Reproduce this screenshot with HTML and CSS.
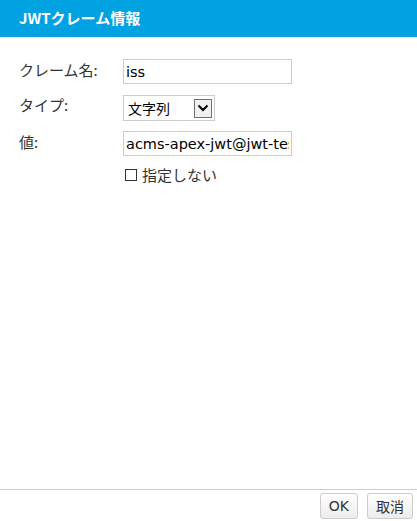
FILE: index.html
```html
<!DOCTYPE html>
<html lang="ja">
<head>
    <meta charset="UTF-8">
    <meta name="viewport" content="width=device-width, initial-scale=1.0">
    <title>JWTクレーム情報</title>
    <link rel="stylesheet" href="styles.css">
</head>
<body>
    <div class="dialog">
        <div class="dialog-title">JWTクレーム情報</div>
        <div class="dialog-body">
            <div class="form-grid">
                <label class="form-label" for="claimName">クレーム名:</label>
                <input class="text-input" type="text" id="claimName" value="iss">

                <label class="form-label" for="claimType">タイプ:</label>
                <div class="select-box" id="claimType">
                    <span class="select-value">文字列</span>
                    <span class="select-button">
                        <svg width="12" height="8" viewBox="0 0 12 8">
                            <path d="M1.5 1.5 L6 6 L10.5 1.5" fill="none" stroke="#000" stroke-width="2"/>
                        </svg>
                    </span>
                </div>

                <label class="form-label" for="claimValue">値:</label>
                <input class="text-input" type="text" id="claimValue" value="acms-apex-jwt@jwt-test.iam.gserviceaccount.com">

                <span></span>
                <label class="check-row">
                    <span class="check-box"></span>
                    <span>指定しない</span>
                </label>
            </div>
        </div>
        <div class="dialog-footer">
            <button class="footer-button">OK</button>
            <button class="footer-button">取消</button>
        </div>
    </div>
</body>
</html>
```

FILE: styles.css
```css
body {
    margin: 0;
    font-family: "DejaVu Sans", "Noto Sans CJK JP", sans-serif;
    color: #333;
    background: #fff;
}
.dialog {
    display: flex;
    flex-direction: column;
    height: 100vh;
}
.dialog-title {
    background-color: #00a2e2;
    color: #fff;
    font-size: 15px;
    font-weight: bold;
    height: 37px;
    line-height: 36px;
    padding-left: 19px;
    font-family: "Noto Sans CJK JP", sans-serif;
}
.dialog-body {
    flex: 1;
    padding: 22px 0 0 19px;
}
.form-grid {
    display: grid;
    grid-template-columns: 104px 169px;
    row-gap: 10px;
    align-items: start;
}
.form-label {
    font-family: "Noto Sans CJK JP", sans-serif;
    font-size: 15px;
    color: #333;
    line-height: 22px;
}
.text-input {
    box-sizing: border-box;
    width: 169px;
    height: 25px;
    border: 1px solid #ccc;
    padding: 0 2px;
    font-family: "DejaVu Sans", "Noto Sans CJK JP", sans-serif;
    font-size: 14.5px;
    color: #000;
    outline: none;
}
.select-box {
    box-sizing: border-box;
    width: 92px;
    height: 26px;
    border: 1px solid #ccc;
    display: flex;
    align-items: center;
    justify-content: space-between;
    padding: 0 2px 0 4px;
    margin-top: 1px;
}
.select-value {
    font-family: "Noto Sans CJK JP", sans-serif;
    font-size: 14px;
    color: #000;
}
.select-button {
    box-sizing: border-box;
    width: 18px;
    height: 19px;
    border: 1px solid #707070;
    background: #f0f0f0;
    display: flex;
    align-items: center;
    justify-content: center;
}
.check-row {
    display: flex;
    align-items: center;
    gap: 5px;
    margin-top: -2px;
    padding-left: 2px;
    font-family: "Noto Sans CJK JP", sans-serif;
    font-size: 15px;
    color: #333;
}
.check-box {
    box-sizing: border-box;
    width: 12px;
    height: 12px;
    border: 1px solid #333;
}
.dialog-footer {
    border-top: 1px solid #ccc;
    height: 31px;
    display: flex;
    justify-content: flex-end;
    align-items: center;
    gap: 9px;
    padding-right: 4px;
}
.footer-button {
    height: 26px;
    padding: 0 8px;
    border: 1px solid #ccc;
    border-radius: 3px;
    background: linear-gradient(#fff, #ececec);
    font-family: "DejaVu Sans", "Noto Sans CJK JP", sans-serif;
    font-size: 14px;
    color: #333;
}
```
